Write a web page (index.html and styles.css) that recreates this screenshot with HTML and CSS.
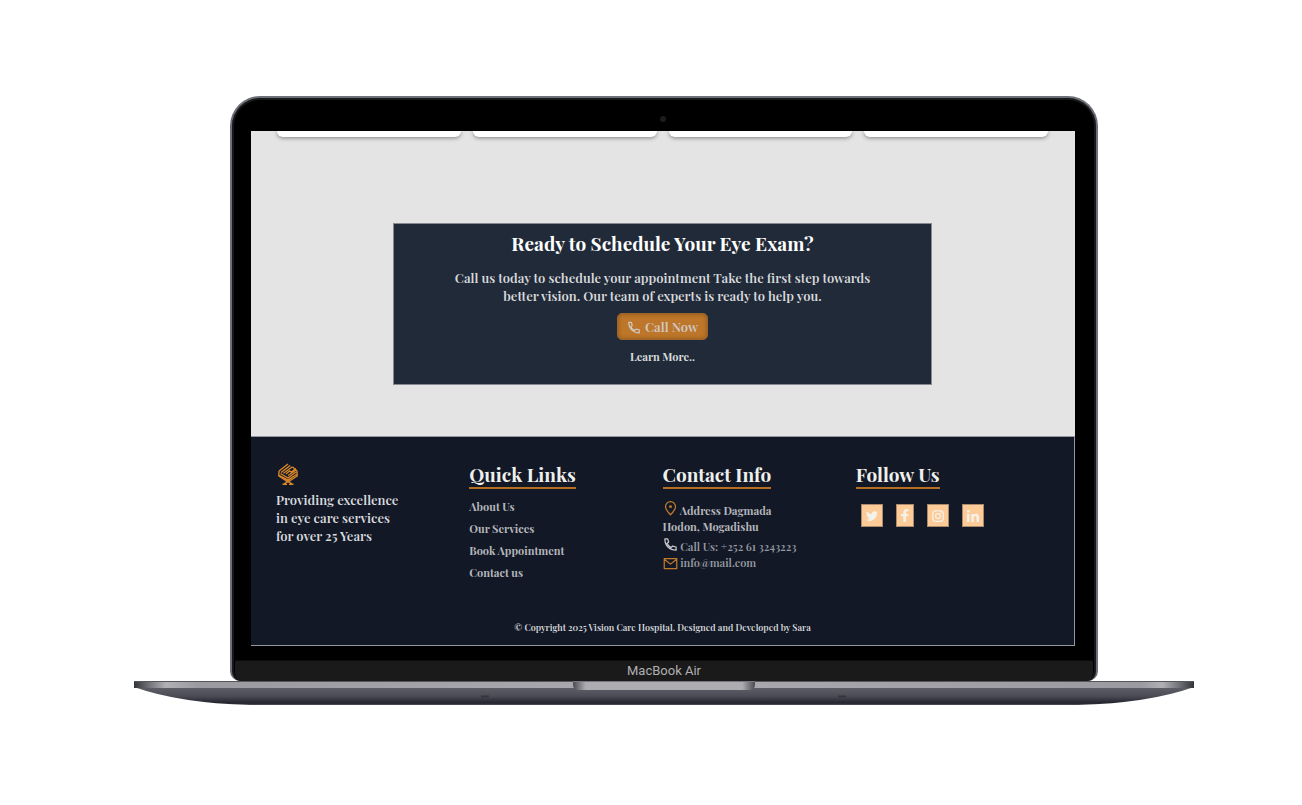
FILE: index.html
```html
<!DOCTYPE html>
<html lang="en">
<head>
<meta charset="utf-8">
<meta name="viewport" content="width=device-width, initial-scale=1">
<title>Vision Care Hospital</title>
<link rel="stylesheet" href="styles.css">
</head>
<body>
<div class="laptop">
  <div class="lid">
    <div class="bezel">
      <div class="camera"></div>
      <div class="screen">
        <div class="cards"><div class="card"></div><div class="card"></div><div class="card"></div><div class="card"></div></div>
        <main class="content">
          <section class="cta">
            <h1 class="cta-title">Ready to Schedule Your Eye Exam?</h1>
            <p class="cta-text">Call us today to schedule your appointment Take the first step towards<br>better vision. Our team of experts is ready to help you.</p>
            <button class="call" type="button">
              <svg class="call-icon" viewBox="0 0 24 24" aria-hidden="true"><path d="M3 4h4.500l1.500 5-2.500 2.500q2 4 6.500 6.500l2.500-2.500 5.500 1.500v5q-8 0-13-5T3 4z" fill="none" stroke="currentColor" stroke-width="2" stroke-linejoin="round"/></svg>
              Call Now
            </button>
            <a class="more" href="#">Learn More..</a>
          </section>
        </main>
        <footer class="footer">
          <div class="columns">
            <section>
              <svg class="logo" viewBox="0 0 20 22" role="img" aria-label="Vision Care"><g fill="none" stroke="#d9862b" stroke-width="1.400"><path d="M1 8 10 1M3 9.500 12.200 2.500M5.500 10.200l9-6.500M8 11l3.500-3 2 1L18 5.500M1 8l-.2 5L10 19l9.200-6L19 8l-4.500-4M2.500 10.500 10 15l8-6M1.500 12.500 10 17.200l8.500-5.700M10 12.500l8-5.500M10 18l-4 3M10 18l4 3M4.500 21.200h4.500M11 21.200h4.500"/></g></svg>
              <p class="about">Providing excellence<br>in eye care services<br>for over 25 Years</p>
            </section>
            <nav>
              <h2 class="heading">Quick Links</h2>
              <ul class="links">
                <li><a href="#">About Us</a></li>
                <li><a href="#">Our Services</a></li>
                <li><a href="#">Book Appointment</a></li>
                <li><a href="#">Contact us</a></li>
              </ul>
            </nav>
            <section>
              <h2 class="heading">Contact Info</h2>
              <address class="contact">
                <p><svg class="icon pin amber" viewBox="0 0 24 24" aria-hidden="true"><path d="M12 22q-8-8-8-13a8 8 0 0 1 16 0q0 5-8 13z" fill="none" stroke="currentColor" stroke-width="2"/><circle cx="12" cy="9" r="2.300" fill="currentColor"/></svg> Address Dagmada<br>Hodon, Mogadishu</p>
                <p class="dim phone"><svg class="icon light" viewBox="0 0 24 24" aria-hidden="true"><path d="M3 3h4.500l1.500 5-2.500 2.500q2 4 6.500 6.500l2.500-2.500 5.500 1.500v5q-8 0-13-5T3 3z" fill="none" stroke="currentColor" stroke-width="2" stroke-linejoin="round"/></svg> Call Us: +252 61 3243223</p>
                <p class="dim"><svg class="icon mail amber" viewBox="0 0 24 24" aria-hidden="true"><path d="M2 4h20v16H2zM3 6l9 7 9-7" fill="none" stroke="currentColor" stroke-width="2" stroke-linejoin="round"/></svg> info@mail.com</p>
              </address>
            </section>
            <section>
              <h2 class="heading">Follow Us</h2>
              <div class="social">
                <a href="#" aria-label="Twitter"><svg width="12" height="12" viewBox="0 0 24 24"><path fill="currentColor" d="M24 4.600a10 10 0 0 1-2.800.8A5 5 0 0 0 23.300 2.700a10 10 0 0 1-3.100 1.200 4.900 4.900 0 0 0-8.400 4.500A14 14 0 0 1 1.700 3.200 4.900 4.900 0 0 0 3.200 9.700a5 5 0 0 1-2.200-.6 4.900 4.900 0 0 0 3.900 4.900 5 5 0 0 1-2.200.1 4.900 4.900 0 0 0 4.600 3.400A10 10 0 0 1 0 19.500 14 14 0 0 0 21.500 7.100 10 10 0 0 0 24 4.600z"/></svg></a>
                <a href="#" aria-label="Facebook"><svg width="8" height="13" viewBox="0 0 14 24"><path fill="currentColor" d="M4 24V13.500H0V9h4V6q0-6 6-6h3.500v4H11Q9 4 9 6v3h4.500l-.7 4.500H9V24z"/></svg></a>
                <a href="#" aria-label="Instagram"><svg width="12" height="12" viewBox="0 0 24 24"><g fill="none" stroke="currentColor" stroke-width="2.500"><rect x="1.500" y="1.500" width="21" height="21" rx="6"/><circle cx="12" cy="12" r="5"/></g><circle cx="18.200" cy="5.800" r="1.500" fill="currentColor"/></svg></a>
                <a href="#" aria-label="LinkedIn"><svg width="12" height="12" viewBox="0 0 24 24"><path fill="currentColor" d="M0 8h5v16H0zM2.500 0a2.800 2.800 0 1 1 0 5.700 2.800 2.800 0 0 1 0-5.700zM8.500 8h4.800v2.200q1.500-2.700 5-2.700 5.700 0 5.700 6.800V24h-5v-8.600q0-3.500-2.500-3.500-3 0-3 3.500V24h-5z"/></svg></a>
              </div>
            </section>
          </div>
          <p class="copyright">© Copyright 2025 Vision Care Hospital. Designed and Developed by Sara</p>
        </footer>
      </div>
    </div>
    <div class="chin">MacBook Air</div>
  </div>
  <div class="base">
    <svg class="deck" viewBox="0 0 1060 24" preserveAspectRatio="none" aria-hidden="true">
      <defs>
        <linearGradient id="under" x1="0" y1="0" x2="0" y2="1"><stop offset="0" stop-color="#5e5f67"/><stop offset=".5" stop-color="#4b4c56"/><stop offset=".9" stop-color="#23232d"/><stop offset="1" stop-color="#55555e"/></linearGradient>
        <linearGradient id="edge"><stop offset="0" stop-color="#33343a"/><stop offset=".015" stop-color="#75767b"/><stop offset=".03" stop-color="#b0b0b5"/><stop offset=".06" stop-color="#9a9aa0"/><stop offset=".5" stop-color="#aaaab0"/><stop offset=".95" stop-color="#9a9aa0"/><stop offset=".97" stop-color="#b0b0b5"/><stop offset=".985" stop-color="#75767b"/><stop offset="1" stop-color="#33343a"/></linearGradient>
      </defs>
      <path d="M0 6Q45 22 116 24H944Q1015 22 1060 6z" fill="url(#under)"/>
      <path d="M0 0H1060V7H0z" fill="url(#edge)"/>
      <path d="M0 0H1060V1H0z" fill="#55565c"/>
      <path d="M347 15.500h8M704 15.500h8" stroke="#34353d" stroke-width="2"/>
    </svg>
    <div class="notch"></div>
  </div>
</div>
</body>
</html>
```
FILE: styles.css
```css
* { box-sizing: border-box; }
body {
  margin: 0;
  padding: 96px 108px 96px 134px;
  background: #fff;
  color: #d8dadd;
  font-family: "Playfair Display", "Liberation Serif", serif;
  font-weight: 600;
}
h1, h2, p, ul { margin: 0; padding: 0; }
a { color: inherit; text-decoration: none; }

.lid {
  margin: 0 96px;
  border: 2px solid #6e6f77;
  border-bottom: 0;
  border-radius: 30px 30px 10px 10px;
  background: #000;
  box-shadow: inset 0 0 0 2px #17181a;
  overflow: hidden;
}
.bezel { padding: 0 21px 14px 19px; }
.camera {
  display: grid;
  place-items: center;
  height: 33px;
  padding-top: 8px;
}
.camera::before {
  content: "";
  width: 6px;
  height: 6px;
  border-radius: 50%;
  background: #1c1c1e;
}
.screen { background: #e4e4e4; overflow: hidden; }
.chin {
  margin: 0 3px;
  height: 21px;
  border-top: 1px solid #0c0c0c;
  border-radius: 0 0 8px 8px;
  background: #1a1a1a;
  color: #b0b0b3;
  font: 400 13px/20px Roboto, "Liberation Sans", sans-serif;
  text-align: center;
}

.cards {
  display: grid;
  grid-template-columns: repeat(4, 1fr);
  gap: 12px;
  padding: 0 27px 0 26px;
}
.card {
  height: 6px;
  border-radius: 0 0 6px 6px;
  background: #fff;
  box-shadow: 0 1px 4px #00000070;
}
.content { padding: 86px 143px 51px 142px; }
.cta {
  display: flex;
  flex-direction: column;
  align-items: center;
  padding: 7px 20px 19px;
  border: 1px solid #868b92;
  background: #212a38;
  text-align: center;
}
.cta-title { color: #fff; font-size: 19px; font-weight: 700; line-height: 24px; }
.cta-text { margin-top: 14px; font-size: 13px; line-height: 18px; }
.call {
  display: flex;
  align-items: center;
  gap: 4px;
  height: 27px;
  margin-top: 8px;
  padding: 0 9px;
  border: 1px solid #9a642a;
  border-radius: 5px;
  background: #bd762a;
  box-shadow: inset 0 0 4px #8a531b;
  color: #cfc9c3;
  font: inherit;
  font-size: 13px;
}
.call-icon { width: 14px; height: 14px; }
.more { margin-top: 9px; font-size: 11px; font-weight: 700; line-height: 16px; }

.footer {
  padding: 24px 25px 10px;
  border: solid #9497a0;
  border-width: 1px 1px 1px 0;
  background: #121826;
}
.columns {
  display: grid;
  grid-template-columns: repeat(4, 1fr);
  min-height: 158px;
}
.logo { display: block; width: 20px; height: 22px; margin: 2px 0 6px 2px; }
.about { font-size: 13px; line-height: 18px; }
.heading {
  display: inline-block;
  border-bottom: 2px solid #b46f22;
  color: #eff0ec;
  font-size: 19px;
  font-weight: 700;
  line-height: 26px;
}
.links {
  display: grid;
  gap: 6px;
  margin-top: 10px;
  color: #b4b6bb;
  font-size: 11px;
  font-weight: 700;
  line-height: 16px;
  list-style: none;
}
.contact {
  display: grid;
  margin-top: 12px;
  color: #b4b6bb;
  font-size: 11px;
  font-style: normal;
  font-weight: 700;
  line-height: 16px;
}
.icon { width: 15px; height: 15px; vertical-align: -1px; }
.mail { vertical-align: -4px; }
.amber { color: #c17a2a; }
.light { color: #c7c8cc; }
.dim { color: #969aa1; font-weight: 600; }
.phone { margin-top: 2px; }
.social {
  display: flex;
  gap: 13px;
  padding: 15px 5px;
  color: #f4f1e8;
}
.social a {
  display: grid;
  place-items: center;
  height: 23px;
  padding: 0 4px;
  border: 1px solid #a98a6d;
  background: #fdcb98;
}
.copyright { font-size: 9px; font-weight: 600; line-height: 16px; text-align: center; }

.base { display: grid; justify-items: center; }
.deck, .notch { grid-area: 1 / 1; }
.deck { display: block; width: 100%; height: 24px; }
.notch {
  z-index: 1;
  width: 182px;
  height: 9px;
  border-top: 1px solid #77787d;
  border-radius: 0 0 5px 5px;
  background: linear-gradient(90deg, #4b4c52, #acacb1 7%, #acacb1 93%, #4b4c52);
}
```
